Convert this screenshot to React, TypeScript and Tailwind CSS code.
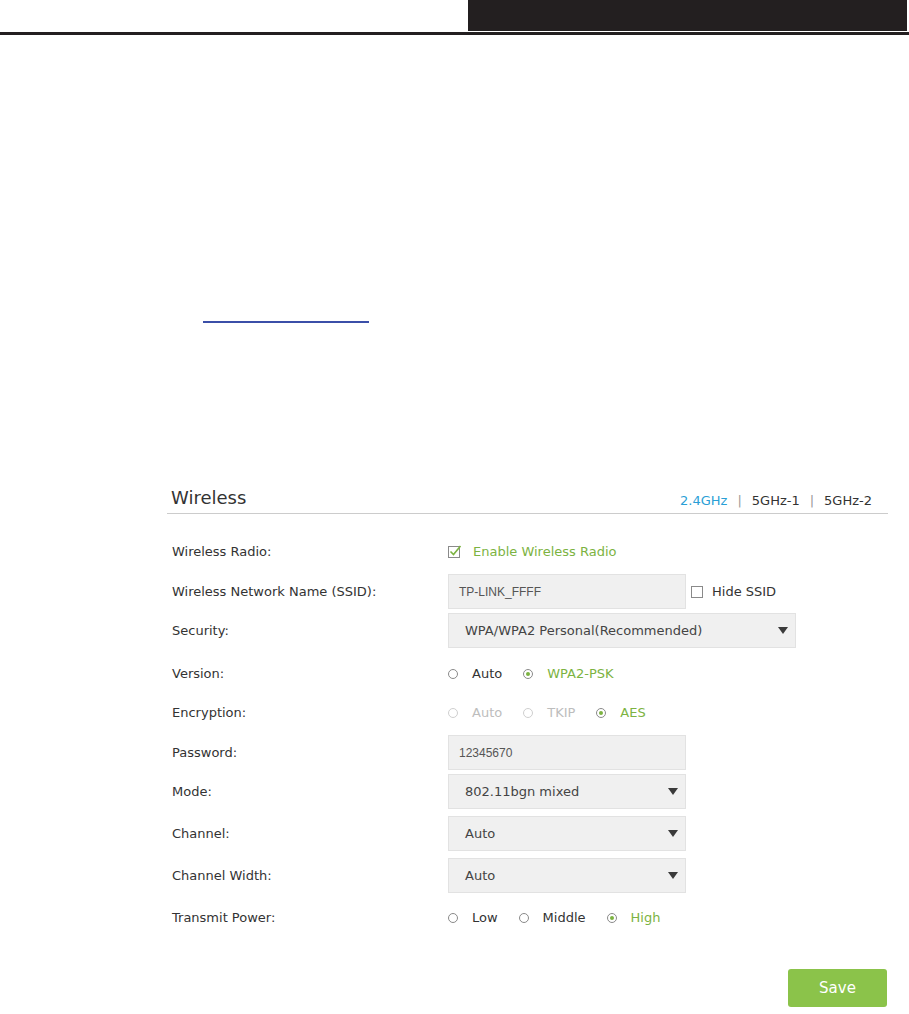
import React from "react";

const UI = { fontFamily: '"DejaVu Sans", Verdana, sans-serif' };
const INPUT_FONT = { fontFamily: '"Liberation Sans", Arial, sans-serif' };

function Radio({ label, checked, disabled }: { label: string; checked?: boolean; disabled?: boolean }) {
  return (
    <div className="flex items-center">
      <span
        className={`w-[10px] h-[10px] rounded-full border flex items-center justify-center ${
          disabled ? "border-[#cfcfcf]" : "border-[#8a8a8a]"
        }`}
      >
        {checked && <span className="w-[4px] h-[4px] rounded-full bg-[#7cb342]" />}
      </span>
      <span
        className={`ml-[14px] text-[13px] ${
          checked ? "text-[#7cb342]" : disabled ? "text-[#bdbdbd]" : "text-[#333]"
        }`}
      >
        {label}
      </span>
    </div>
  );
}

function Arrow() {
  return (
    <svg width="10" height="7" viewBox="0 0 10 7">
      <path d="M0 0 H10 L5 7 Z" fill="#3a3a3a" />
    </svg>
  );
}

function SelectBox({ value, width }: { value: string; width: string }) {
  return (
    <div
      className={`${width} h-[35px] bg-[#f0f0f0] border border-[#e2e2e2] flex items-center justify-between pl-[16px] pr-[7px] text-[13px] text-[#444]`}
    >
      <span>{value}</span>
      <Arrow />
    </div>
  );
}

function TextBox({ value }: { value: string }) {
  return (
    <div
      className="w-[238px] h-[35px] bg-[#f0f0f0] border border-[#e2e2e2] flex items-center pl-[10px] text-[12px] text-[#555]"
      style={INPUT_FONT}
    >
      {value}
    </div>
  );
}

function Row({ label, className, children }: { label: string; className: string; children: React.ReactNode }) {
  return (
    <div className={`flex items-center ${className}`}>
      <div className="w-[276px] text-[13px] text-[#333]">{label}</div>
      <div className="flex items-center">{children}</div>
    </div>
  );
}

export default function App() {
  return (
    <div className="w-[909px] h-[1014px] bg-white overflow-hidden" style={UI}>
      {/* ヘッダー */}
      <div className="flex h-[31px]">
        <div className="flex-1" />
        <div className="w-[439px] bg-[#231f20] mr-[2px]" />
      </div>
      <div className="h-px" />
      <div className="h-[3px] bg-[#231f20]" />

      {/* リンクの下線 */}
      <div className="ml-[203px] mt-[286px] w-[166px] h-[2px] bg-[#3b4fa8]" />

      {/* Wireless パネル */}
      <div className="ml-[167px] w-[721px] mt-[164px]">
        <div className="h-[27px] flex items-end justify-between pl-[4px] pr-[16px] pb-[6px] border-b border-[#cccccc]">
          <span className="text-[18px] text-[#333] leading-none">Wireless</span>
          <div className="flex items-center text-[13px] leading-none">
            <span className="text-[#2a9fd6]">2.4GHz</span>
            <span className="text-[#999] mx-[10px]">|</span>
            <span className="text-[#333]">5GHz-1</span>
            <span className="text-[#999] mx-[10px]">|</span>
            <span className="text-[#333]">5GHz-2</span>
          </div>
        </div>

        <div className="flex flex-col pl-[5px]">
          <Row label="Wireless Radio:" className="h-[20px] mt-[28px]">
            <svg width="14" height="13" viewBox="0 0 14 13" className="-mt-[2px]">
              <rect x="0.5" y="1.5" width="11" height="11" fill="white" stroke="#8a8a8a" />
              <path d="M2.5 6.5 L5.5 9.5 L12.5 1" fill="none" stroke="#7cb342" strokeWidth="1.6" />
            </svg>
            <span className="ml-[11px] text-[13px] text-[#7cb342]">Enable Wireless Radio</span>
          </Row>

          <Row label="Wireless Network Name (SSID):" className="h-[35px] mt-[12px]">
            <TextBox value="TP-LINK_FFFF" />
            <span className="ml-[5px] w-[12px] h-[12px] border border-[#8a8a8a] bg-white" />
            <span className="ml-[9px] text-[13px] text-[#333]">Hide SSID</span>
          </Row>

          <Row label="Security:" className="h-[35px] mt-[4px]">
            <SelectBox value="WPA/WPA2 Personal(Recommended)" width="w-[348px]" />
          </Row>

          <Row label="Version:" className="h-[20px] mt-[16px]">
            <div className="flex items-center gap-[21px]">
              <Radio label="Auto" />
              <Radio label="WPA2-PSK" checked />
            </div>
          </Row>

          <Row label="Encryption:" className="h-[20px] mt-[19px]">
            <div className="flex items-center gap-[21px]">
              <Radio label="Auto" disabled />
              <Radio label="TKIP" disabled />
              <Radio label="AES" checked />
            </div>
          </Row>

          <Row label="Password:" className="h-[35px] mt-[12px]">
            <TextBox value="12345670" />
          </Row>

          <Row label="Mode:" className="h-[35px] mt-[4px]">
            <SelectBox value="802.11bgn mixed" width="w-[238px]" />
          </Row>

          <Row label="Channel:" className="h-[35px] mt-[7px]">
            <SelectBox value="Auto" width="w-[238px]" />
          </Row>

          <Row label="Channel Width:" className="h-[35px] mt-[7px]">
            <SelectBox value="Auto" width="w-[238px]" />
          </Row>

          <Row label="Transmit Power:" className="h-[20px] mt-[15px]">
            <div className="flex items-center gap-[21px]">
              <Radio label="Low" />
              <Radio label="Middle" />
              <Radio label="High" checked />
            </div>
          </Row>

          <div className="flex justify-end mt-[41px] pr-[1px]">
            <button className="w-[99px] h-[38px] rounded-[3px] bg-[#8bc34a] text-[15px] text-white">
              Save
            </button>
          </div>
        </div>
      </div>
    </div>
  );
}
